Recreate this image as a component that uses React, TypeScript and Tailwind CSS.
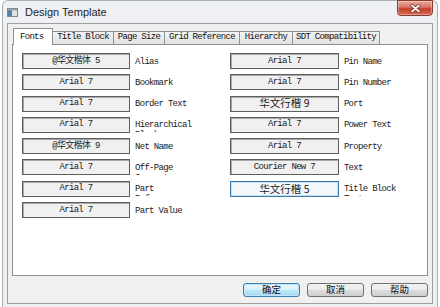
const mono = { fontFamily: '"Liberation Mono", "Noto Sans CJK SC", monospace' };

const leftRows = [
  { font: "@华文楷体 5", label: "Alias", cjk: "kai" },
  { font: "Arial 7", label: "Bookmark" },
  { font: "Arial 7", label: "Border Text" },
  { font: "Arial 7", label: "Hierarchical Block" },
  { font: "@华文楷体 9", label: "Net Name", cjk: "kai" },
  { font: "Arial 7", label: "Off-Page Connector" },
  { font: "Arial 7", label: "Part Reference" },
  { font: "Arial 7", label: "Part Value" },
];

const rightRows = [
  { font: "Arial 7", label: "Pin Name" },
  { font: "Arial 7", label: "Pin Number" },
  { font: "华文行楷 9", label: "Port", cjk: "sans" },
  { font: "Arial 7", label: "Power Text" },
  { font: "Arial 7", label: "Property" },
  { font: "Courier New 7", label: "Text" },
  { font: "华文行楷 5", label: "Title Block Text", cjk: "sans", focused: true },
];

const tabs = [
  { name: "Fonts", w: "w-[40px]" },
  { name: "Title Block", w: "w-[61px]" },
  { name: "Page Size", w: "w-[51px]" },
  { name: "Grid Reference", w: "w-[75px]" },
  { name: "Hierarchy", w: "w-[53px]" },
  { name: "SDT Compatibility", w: "w-[87px]" },
];

type Row = { font: string; label: string; cjk?: string; focused?: boolean };

function FontRow({ row, btnW }: { row: Row; btnW: string }) {
  return (
    <div className="flex items-start h-4">
      <div
        className={`${btnW} h-4 flex items-center justify-center border ${
          row.focused
            ? "border-[#3d7bad] bg-[#f3f8fc] shadow-[inset_0_0_0_1px_#c5e0f3]"
            : "border-[#5e5e5e] bg-[#f0f0f0] shadow-[inset_1px_1px_0_#a8a8a8]"
        }`}
      >
        {row.cjk === "sans" ? (
          <span
            className="text-[10.5px] leading-none text-[#1a1a1a]"
            style={{ fontFamily: '"Noto Sans CJK SC", "Noto Sans", sans-serif' }}
          >
            {row.font}
          </span>
        ) : (
          <span className="text-[9px] tracking-[-0.7px] leading-none text-[#1a1a1a]" style={mono}>
            {row.font}
          </span>
        )}
      </div>
      {/* label box is clipped like the original static control, second line barely shows */}
      <div
        className="ml-[5px] w-[60px] h-[15.5px] overflow-hidden pt-[3.5px] text-[9px] leading-[10px] tracking-[-0.7px] text-[#1a1a1a]"
        style={mono}
      >
        {row.label}
      </div>
    </div>
  );
}

function DlgButton({ text, primary }: { text: string; primary?: boolean }) {
  return (
    <div
      className={`w-[57px] h-[14px] rounded-[3px] border flex items-center justify-center text-[9.5px] leading-none text-[#111] ${
        primary
          ? "border-[#3c7fb1] bg-[linear-gradient(#eaf6fd_0%,#d9f0fc_50%,#bee6fd_51%,#a7d9f5_100%)] shadow-[inset_0_0_0_1px_#bfe3f9]"
          : "border-[#707070] bg-[linear-gradient(#f2f2f2_0%,#ebebeb_50%,#dddddd_51%,#cfcfcf_100%)]"
      }`}
      style={{ fontFamily: '"Noto Sans CJK SC", sans-serif' }}
    >
      {text}
    </div>
  );
}

export default function App() {
  return (
    <div className="w-[440px] h-[307px] bg-white px-[2px] overflow-hidden">
      <div className="h-[307px] rounded-t-[6px] border-x border-t border-[#a9b0b8] bg-[#eef0f3] flex flex-col">
        <div className="h-[22px] flex items-center relative">
          <svg width="11" height="9" viewBox="0 0 11 9" className="ml-[4px] mt-[1px]">
            <rect x="0.5" y="0.5" width="10" height="8" fill="#dfe3e8" stroke="#7d8792" />
            <rect x="1" y="1" width="4" height="7" fill="#4f7fae" />
            <rect x="1" y="1" width="9" height="1.5" fill="#9aa4ae" />
          </svg>
          <span
            className="ml-[7px] mt-[1px] text-[11px] text-[#1e1e1e] leading-none"
            style={{ fontFamily: '"Liberation Sans", Arial, sans-serif' }}
          >
            Design Template
          </span>
          <div className="absolute top-[-1px] right-[4px] w-[36px] h-[16px] rounded-b-[4px] border border-[#8b3a2e] bg-[linear-gradient(#e9a99c_0%,#d47566_45%,#c2412d_55%,#d56b52_100%)] flex items-center justify-center shadow-[inset_0_0_0_1px_rgba(255,255,255,0.35)]">
            <svg width="11" height="9" viewBox="0 0 11 9">
              <path d="M2 1.5 L9 7.5 M9 1.5 L2 7.5" stroke="#6b2a22" strokeWidth="3" strokeLinecap="round" />
              <path d="M2 1.5 L9 7.5 M9 1.5 L2 7.5" stroke="#ffffff" strokeWidth="1.7" strokeLinecap="round" />
            </svg>
          </div>
        </div>

        <div className="ml-[4px] mr-[4px] h-[281px] border border-[#a0a0a0] bg-[#f0f0f0] flex flex-col px-[4px]">
          <div className="h-[20px] flex items-end relative z-10" style={mono}>
            {tabs.map((t, i) =>
              i === 0 ? (
                <div
                  key={t.name}
                  className={`${t.w} ml-[1px] h-[17px] -mb-[1px] bg-white border-x border-t border-[#8e8f8f] pl-[6px] pt-[2px] text-[9px] tracking-[-0.7px] text-[#111]`}
                >
                  {t.name}
                </div>
              ) : (
                <div
                  key={t.name}
                  className={`${t.w} h-[13px] border-t border-r border-[#8e8f8f] bg-[linear-gradient(#f3f3f3,#e3e3e3)] flex items-center justify-center text-[9px] tracking-[-0.7px] text-[#111]`}
                >
                  {t.name}
                </div>
              )
            )}
          </div>

          <div className="h-[232px] bg-white border border-[#8e8f8f] pl-[9px] pt-[8px] flex">
            <div className="w-[211px] flex flex-col gap-y-[5.3px]">
              {leftRows.map((r) => (
                <FontRow key={r.label} row={r} btnW="w-[108px]" />
              ))}
            </div>
            <div className="w-[200px] flex flex-col gap-y-[5.3px]">
              {rightRows.map((r) => (
                <FontRow key={r.label} row={r} btnW="w-[109px]" />
              ))}
            </div>
          </div>

          <div className="mt-[7px] flex justify-end gap-[7px]">
            <DlgButton text="确定" primary />
            <DlgButton text="取消" />
            <DlgButton text="帮助" />
          </div>
        </div>
      </div>
    </div>
  );
}
